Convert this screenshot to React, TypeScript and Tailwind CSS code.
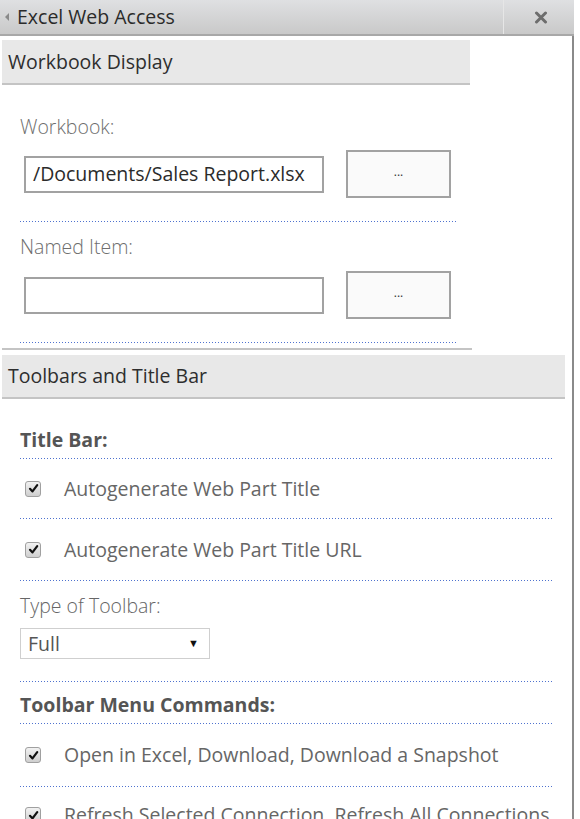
import React from "react";

const font = { fontFamily: '"Open Sans", "Noto Sans", sans-serif' };

function Dotted() {
  return (
    <div className="h-px bg-[linear-gradient(to_right,#4f72cf_1px,transparent_1px)] bg-[length:3px_1px]" />
  );
}

function Check() {
  return (
    <span className="inline-flex h-[16px] w-[16px] shrink-0 items-center justify-center rounded-[3px] border border-[#a0a0a0] bg-gradient-to-b from-[#f2f2f2] to-[#cfcfcf]">
      <svg width="11" height="11" viewBox="0 0 11 11">
        <path d="M2 5.8 L4.5 8.4 L9.2 2.2" fill="none" stroke="#111" strokeWidth="2.2" strokeLinecap="round" strokeLinejoin="round" />
      </svg>
    </span>
  );
}

function CheckRow({ label, h }: { label: string; h: string }) {
  return (
    <div className={`flex items-center gap-[23px] pl-[5px] ${h}`}>
      <Check />
      <span className="whitespace-nowrap text-[19.5px] leading-[24px] text-[#666]">{label}</span>
    </div>
  );
}

function DotsButton() {
  return (
    <div className="ml-[22px] flex h-[48px] w-[105px] items-center justify-center border-2 border-[#a2a2a2] bg-[#fafafa] pb-[4px] text-[12px] text-[#333]">
      ...
    </div>
  );
}

export default function App() {
  return (
    <div className="h-[819px] w-[580px] overflow-hidden bg-white" style={font}>
      <div className="flex h-[36px] w-[574px] border-b-2 border-[#a8a8a8] bg-gradient-to-b from-[#dfe0e2] to-[#c9c9c9]">
        <div className="flex flex-1 items-center gap-[8px] pl-[5px]">
          <svg width="4" height="8" viewBox="0 0 4 8"><path d="M4 0 L0 4 L4 8Z" fill="#8a8a8a" /></svg>
          <span className="text-[19.5px] leading-[24px] text-[#2a2a2a]">Excel Web Access</span>
        </div>
        <div className="flex w-[71px] items-center justify-center border-l border-[#e6e6e6] pl-[4px]">
          <svg width="14" height="13" viewBox="0 0 14 13">
            <path d="M2.5 2 L11.5 11 M11.5 2 L2.5 11" stroke="#6d6d6d" strokeWidth="3" strokeLinecap="round" />
          </svg>
        </div>
      </div>
      <div className="h-[783px] w-[574px] border-r-2 border-[#8a8a8a]">
        <div className="pl-[2px] pt-[4px]">
          <div className="flex h-[45px] w-[468px] items-center border-b-2 border-[#c4c4c4] bg-[#e8e8e8] pl-[6px] text-[19.5px] text-[#2e2e2e]">
            Workbook Display
          </div>
        </div>
        <div className="ml-[20px] w-[436px]">
          <div className="pt-[30px] text-[19.5px] font-light leading-[24px] text-[#6e6e6e]">Workbook:</div>
          <div className="mt-[11px] flex items-center">
            <div className="ml-[4px] flex h-[37px] w-[300px] items-center border-2 border-[#a2a2a2] pl-[7px] text-[19.5px] text-[#2b2b2b]">
              /Documents/Sales Report.xlsx
            </div>
            <DotsButton />
          </div>
          <div className="mt-[23px]"><Dotted /></div>
          <div className="pt-[13px] text-[19.5px] font-light leading-[24px] text-[#6e6e6e]">Named Item:</div>
          <div className="mt-[12px] flex items-center">
            <div className="ml-[4px] h-[37px] w-[300px] border-2 border-[#a2a2a2]" />
            <DotsButton />
          </div>
          <div className="mt-[23px]"><Dotted /></div>
        </div>
        <div className="ml-[2px] mt-[5px] w-[470px] border-t-2 border-[#c4c4c4]" />
        <div className="pl-[2px] pt-[5px]">
          <div className="flex h-[44px] w-[563px] items-center border-b-2 border-[#c4c4c4] bg-[#e8e8e8] pl-[6px] text-[19.5px] text-[#2e2e2e]">
            Toolbars and Title Bar
          </div>
        </div>
        <div className="ml-[20px] w-[532px]">
          <div className="pb-[6px] pt-[29px] text-[19.5px] font-bold leading-[24px] text-[#555]">Title Bar:</div>
          <Dotted />
          <CheckRow label="Autogenerate Web Part Title" h="h-[59px]" />
          <Dotted />
          <CheckRow label="Autogenerate Web Part Title URL" h="h-[61px]" />
          <Dotted />
          <div className="pt-[13px] text-[19.5px] font-light leading-[24px] text-[#666]">Type of Toolbar:</div>
          <div className="mt-[10px] flex h-[31px] w-[190px] items-center justify-between border border-[#cfcfcf] pl-[7px] pr-[10px]">
            <span className="text-[19.5px] leading-[24px] text-[#555]">Full</span>
            <span className="text-[11px] text-[#111]">▼</span>
          </div>
          <div className="mt-[22px]"><Dotted /></div>
          <div className="pb-[6px] pt-[11px] text-[19.5px] font-bold leading-[24px] text-[#555]">Toolbar Menu Commands:</div>
          <Dotted />
          <CheckRow label="Open in Excel, Download, Download a Snapshot" h="h-[62px]" />
          <Dotted />
          <CheckRow label="Refresh Selected Connection, Refresh All Connections" h="h-[56px]" />
        </div>
      </div>
    </div>
  );
}
